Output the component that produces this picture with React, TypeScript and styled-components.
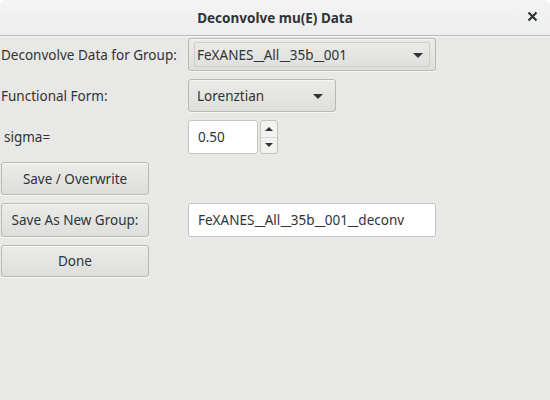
import React from 'react'
import styled, { createGlobalStyle } from 'styled-components'

const GlobalStyle = createGlobalStyle`
  html, body {
    margin: 0;
    padding: 0;
    background: #ffffff;
  }
  body {
    font-family: 'Noto Sans', 'DejaVu Sans', sans-serif;
    font-size: 13.5px;
    color: #2e3436;
  }
`

const Window = styled.div`
  width: 550px;
  height: 400px;
  display: flex;
  flex-direction: column;
  background: #e8e8e7;
  border-radius: 7px 7px 0 0;
  overflow: hidden;
`

const TitleBar = styled.div`
  height: 35px;
  flex: none;
  display: flex;
  align-items: center;
  justify-content: center;
  position: relative;
  background: linear-gradient(#f4f4f4, #eeeeee);
  border-bottom: 1px solid #b9b9b6;
  box-shadow: 0 1px 0 #f4f4f3;
  font-weight: bold;
  color: #2e3436;
`

const CloseButton = styled.div`
  position: absolute;
  right: 12px;
  top: 11px;
  width: 11px;
  height: 11px;
  display: flex;
`

const Body = styled.div`
  display: grid;
  grid-template-columns: 187px 1fr;
  grid-template-rows: 33px 33px 34px 33px 34px 32px;
  row-gap: 8px;
  padding: 2px 0 0 1px;
`

const Label = styled.div<{ $indent?: number }>`
  display: flex;
  align-items: center;
  padding-left: ${p => p.$indent ?? 0}px;
  color: #2e3436;
`

const Cell = styled.div`
  display: flex;
  align-items: stretch;
`

const Combo = styled.div<{ $width: number; $framed?: boolean }>`
  width: ${p => p.$width}px;
  box-sizing: border-box;
  border: 1px solid #b8b8b5;
  border-radius: 3px;
  background: linear-gradient(#ebebea, #dededc);
  box-shadow: inset 0 1px #f6f6f5, 0 1px rgba(255, 255, 255, 0.6);
  padding: ${p => (p.$framed ? '3px 5px 3px 5px' : '0 12px 0 8px')};
  display: flex;
  align-items: stretch;
`

const ComboInner = styled.div<{ $framed?: boolean }>`
  flex: 1;
  display: flex;
  align-items: center;
  justify-content: space-between;
  border: ${p => (p.$framed ? '1px solid #cdcdca' : 'none')};
  border-radius: 2px;
  padding: ${p => (p.$framed ? '0 6px 0 2px' : '0')};
`

const Arrow = styled.span`
  width: 0;
  height: 0;
  border-left: 5px solid transparent;
  border-right: 5px solid transparent;
  border-top: 5px solid #2e3436;
  margin-top: 1px;
`

const Entry = styled.div<{ $width: number }>`
  width: ${p => p.$width}px;
  box-sizing: border-box;
  background: #ffffff;
  border: 1px solid #c3c3c0;
  border-radius: 3px;
  display: flex;
  align-items: center;
  padding-left: 9px;
  color: #2e3436;
`

const Spin = styled.div`
  display: flex;
  gap: 2px;
`

const SpinButtons = styled.div`
  width: 18px;
  box-sizing: border-box;
  border: 1px solid #c3c3c0;
  border-radius: 3px;
  background: #f2f2f1;
  display: flex;
  flex-direction: column;
`

const SpinHalf = styled.div<{ $up?: boolean }>`
  flex: 1;
  display: flex;
  align-items: center;
  justify-content: center;
  border-top: ${p => (p.$up ? 'none' : '1px solid #d8d8d5')};
`

const SmallArrow = styled.span<{ $up?: boolean }>`
  width: 0;
  height: 0;
  border-left: 4px solid transparent;
  border-right: 4px solid transparent;
  ${p => (p.$up ? 'border-bottom: 4px solid #2e3436;' : 'border-top: 4px solid #2e3436;')}
`

const Button = styled.div`
  width: 148px;
  box-sizing: border-box;
  border: 1px solid #b8b8b5;
  border-radius: 3px;
  background: linear-gradient(#ebebea, #dededc);
  box-shadow: inset 0 1px #f6f6f5, 0 1px rgba(255, 255, 255, 0.6);
  display: flex;
  align-items: center;
  justify-content: center;
  color: #2e3436;
`

// the dialog's font has a much wider underscore than Noto Sans
const Underscore = styled.span`
  display: inline-block;
  transform: scaleX(1.75);
  margin: 0 2.2px;
`

const Value = ({ text }: { text: string }) => (
  <span>
    {text.split('_').map((part, i) => (
      <React.Fragment key={i}>
        {i > 0 && <Underscore>_</Underscore>}
        {part}
      </React.Fragment>
    ))}
  </span>
)

export default function App() {
  return (
    <Window>
      <GlobalStyle />
      <TitleBar>
        Deconvolve mu(E) Data
        <CloseButton>
          <svg width="11" height="11" viewBox="0 0 11 11">
            <path d="M1.5 1.5 L9.5 9.5 M9.5 1.5 L1.5 9.5" stroke="#2e3436" strokeWidth="2.2" />
          </svg>
        </CloseButton>
      </TitleBar>
      <Body>
        <Label>Deconvolve Data for Group:</Label>
        <Cell>
          <Combo $width={248} $framed>
            <ComboInner $framed>
              <Value text="FeXANES_All_35b_001" />
              <Arrow />
            </ComboInner>
          </Combo>
        </Cell>

        <Label>Functional Form:</Label>
        <Cell>
          <Combo $width={148}>
            <ComboInner>
              <span>Lorenztian</span>
              <Arrow />
            </ComboInner>
          </Combo>
        </Cell>

        <Label $indent={3}>sigma=</Label>
        <Cell>
          <Spin>
            <Entry $width={70}>0.50</Entry>
            <SpinButtons>
              <SpinHalf $up>
                <SmallArrow $up />
              </SpinHalf>
              <SpinHalf>
                <SmallArrow />
              </SpinHalf>
            </SpinButtons>
          </Spin>
        </Cell>

        <Cell>
          <Button>Save / Overwrite</Button>
        </Cell>
        <div />

        <Cell>
          <Button>Save As New Group:</Button>
        </Cell>
        <Cell>
          <Entry $width={248}>
            <Value text="FeXANES_All_35b_001_deconv" />
          </Entry>
        </Cell>

        <Cell>
          <Button>Done</Button>
        </Cell>
        <div />
      </Body>
    </Window>
  )
}
